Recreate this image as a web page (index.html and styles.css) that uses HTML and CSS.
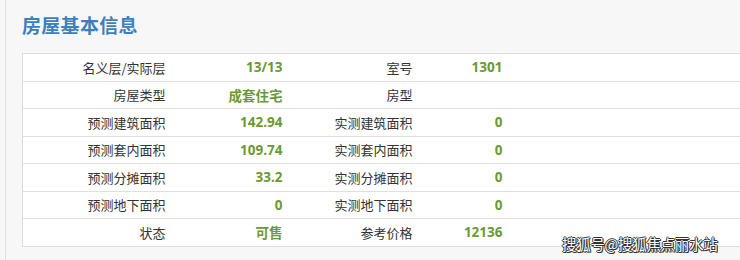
FILE: index.html
```html
<!DOCTYPE html>
<html lang="zh-CN">
<head>
<meta charset="utf-8">
<link rel="stylesheet" href="styles.css">
</head>
<body>
<div class="panel">
  <h2 class="title">房屋基本信息</h2>
  <table class="info">
    <colgroup>
      <col class="c1"><col class="c2"><col class="c3"><col class="c4"><col class="c5">
    </colgroup>
    <tr><td class="lbl">名义层/实际层</td><td class="val">13/13</td><td class="lbl">室号</td><td class="val">1301</td><td></td></tr>
    <tr><td class="lbl">房屋类型</td><td class="val">成套住宅</td><td class="lbl">房型</td><td class="val"></td><td></td></tr>
    <tr><td class="lbl">预测建筑面积</td><td class="val">142.94</td><td class="lbl">实测建筑面积</td><td class="val">0</td><td></td></tr>
    <tr><td class="lbl">预测套内面积</td><td class="val">109.74</td><td class="lbl">实测套内面积</td><td class="val">0</td><td></td></tr>
    <tr><td class="lbl">预测分摊面积</td><td class="val">33.2</td><td class="lbl">实测分摊面积</td><td class="val">0</td><td></td></tr>
    <tr><td class="lbl">预测地下面积</td><td class="val">0</td><td class="lbl">实测地下面积</td><td class="val">0</td><td></td></tr>
    <tr><td class="lbl">状态</td><td class="val">可售</td><td class="lbl">参考价格</td><td class="val">12136</td><td></td></tr>
  </table>
  <div class="watermark">搜狐号@搜狐焦点丽水站</div>
</div>
</body>
</html>
```
FILE: styles.css
```css
html, body {
  margin: 0;
  padding: 0;
  background: #f7f7f7;
  overflow: hidden;
}
body {
  font-family: "Open Sans", "Noto Sans CJK SC", sans-serif;
  width: 740px;
  height: 260px;
}
.panel {
  position: relative;
  margin-left: 5px;
  height: 260px;
  border-left: 1px solid #e2e2e2;
  padding: 11px 0 0 16px;
  box-sizing: border-box;
}
.title {
  margin: 0;
  font-family: "Noto Sans CJK SC", sans-serif;
  font-size: 19px;
  line-height: 28px;
  font-weight: 700;
  color: #3b7fbd;
  letter-spacing: 0.3px;
}
.info {
  margin-top: 14px;
  border-collapse: collapse;
  background: #fff;
  width: 100%;
  table-layout: fixed;
  border-left: 1px solid #dcdcdc;
}
.c1 { width: 153px; }
.c2 { width: 117px; }
.c3 { width: 130px; }
.c4 { width: 90px; }
.info td {
  height: 27.5px;
  padding: 0 10px 0 0;
  border-top: 1px solid #e0e0e0;
  border-bottom: 1px solid #e0e0e0;
  font-size: 13px;
  text-align: right;
  box-sizing: border-box;
  white-space: nowrap;
}
.lbl {
  color: #333;
  font-family: "Noto Sans CJK SC", sans-serif;
}
.info .val {
  color: #6b9a34;
  font-weight: 700;
  font-size: 13.5px;
}
.watermark {
  position: absolute;
  left: 556px;
  top: 233px;
  font-family: "Noto Sans CJK SC", sans-serif;
  font-size: 14.5px;
  color: #fff;
  letter-spacing: -0.3px;
  text-shadow: -1px 0 #333, 1px 0 #333, 0 -1px #333, 0 1px #333, 1px 1px #333;
}
```
